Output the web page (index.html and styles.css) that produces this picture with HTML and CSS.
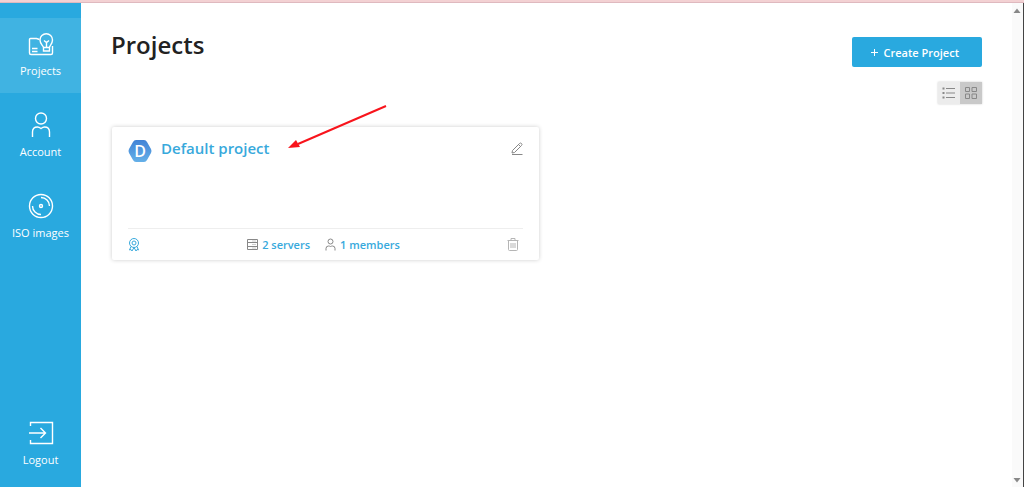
FILE: index.html
```html
<!DOCTYPE html>
<html lang="en">

<head>
    <meta charset="UTF-8">
    <meta name="viewport" content="width=device-width, initial-scale=1.0">
    <title>Projects</title>
    <link rel="stylesheet" href="styles.css">
</head>

<body>
    <div class="top-line"></div>
    <div class="layout">
        <nav class="sidebar">
            <a href="#" class="nav-item active">
                <svg width="26" height="24" viewBox="0 0 26 24">
                    <path d="M11.500 6.500L8.500 5.500H2.500Q1.500 5.500 1.500 6.500V20Q1.500 21.500 3 21.500H23Q24.500 21.500 24.500 20V13" />
                    <path d="M4 15.500H9.500M4 18.500H9.500" />
                    <path d="M15.500 14.500C15 12.500 12 11 12 7A6 6 0 0 1 24.500 7C24.500 11 21.500 12.500 21.500 14.500ZM15.500 14.500V18H21.500V14.500M18.500 14V9.500M16 7.500L18.500 9.500L21 7.500" />
                </svg>
                <span>Projects</span>
            </a>
            <a href="#" class="nav-item">
                <svg width="26" height="26" viewBox="0 0 26 26">
                    <circle cx="13" cy="6.500" r="5.500" />
                    <path d="M4.500 25V20Q4.500 15 9.500 15Q11 15 13 16.500Q15 15 16.500 15Q21.500 15 21.500 20V25" />
                </svg>
                <span>Account</span>
            </a>
            <a href="#" class="nav-item">
                <svg width="26" height="26" viewBox="0 0 26 26">
                    <circle cx="13" cy="13" r="11.500" />
                    <circle cx="13" cy="13" r="1.500" />
                    <path d="M13 4.500A8.500 8.500 0 0 1 21.500 13M4.500 13A8.500 8.500 0 0 0 13 21.500" />
                </svg>
                <span>ISO images</span>
            </a>
            <a href="#" class="nav-item logout">
                <svg width="26" height="26" viewBox="0 0 26 26">
                    <path d="M2.500 6V2.500H24.500V23.500H2.500V20M1 13H17.500M12.500 8L17.500 13L12.500 18" />
                </svg>
                <span>Logout</span>
            </a>
        </nav>

        <main class="content">
            <header class="page-header">
                <h1>Projects</h1>
                <div class="header-actions">
                    <button type="button" class="create-btn">
                        <svg width="7" height="7" viewBox="0 0 7 7">
                            <path d="M3.500 0V7M0 3.500H7" />
                        </svg>
                        <span>Create Project</span>
                    </button>
                    <div class="view-toggle">
                        <button type="button" aria-label="List view">
                            <svg width="14" height="12" viewBox="0 0 14 12">
                                <path d="M4 1.500H13M4 6H13M4 10.500H13" />
                                <path d="M0.500 1.500H2.500M0.500 6H2.500M0.500 10.500H2.500" stroke-width="2" />
                            </svg>
                        </button>
                        <button type="button" class="selected" aria-label="Grid view">
                            <svg width="12" height="12" viewBox="0 0 12 12">
                                <path d="M0.500 0.500H4.500V4.500H0.500ZM7 0.500H11.500V4.500H7ZM0.500 7H4.500V11.500H0.500ZM7 7H11.500V11.500H7Z" />
                            </svg>
                        </button>
                    </div>
                </div>
            </header>

            <section class="project-grid">
                <article class="project-card">
                    <div class="card-top">
                        <svg class="avatar" width="24" height="24" viewBox="0 0 24 24">
                            <defs>
                                <linearGradient id="avatar-fill" x1="0" y1="0" x2="0" y2="1">
                                    <stop offset="0" stop-color="#4283d6" />
                                    <stop offset="1" stop-color="#65b0e8" />
                                </linearGradient>
                            </defs>
                            <path d="M8 1H16Q18 1 19 3L23 10Q24 12 23 14L19 21Q18 23 16 23H8Q6 23 5 21L1 14Q0 12 1 10L5 3Q6 1 8 1Z" fill="url(#avatar-fill)" />
                            <text x="12" y="18" text-anchor="middle">D</text>
                        </svg>
                        <a href="#" class="project-name">Default project</a>
                        <button type="button" class="icon-btn edit" aria-label="Edit project">
                            <svg width="12" height="14" viewBox="0 0 12 14">
                                <path d="M1 11L1.500 8.500L8.500 1.500Q9.500 0.500 10.500 1.500Q11.500 2.500 10.500 3.500L3.500 10.500ZM7.500 2.500L9.500 4.500M1 12.500H11.500" />
                            </svg>
                        </button>
                    </div>
                    <div class="card-bottom">
                        <svg class="badge" width="12" height="14" viewBox="0 0 12 14">
                            <circle cx="6" cy="5" r="4.500" />
                            <circle cx="6" cy="5" r="2" />
                            <path d="M3 8.500L1.500 12L3 11.500L4 13L6 9.500L8 13L9 11.500L10.500 12L9 8.500" />
                        </svg>
                        <div class="stats">
                            <a href="#" class="stat">
                                <svg width="11" height="11" viewBox="0 0 11 11">
                                    <path d="M0.500 0.500H10.500V10.500H0.500ZM0.500 3.500H10.500M0.500 7.500H10.500" />
                                    <path d="M5 2H9M5 5.500H9M5 9H9" opacity="0.4" />
                                </svg>
                                <span>2 servers</span>
                            </a>
                            <a href="#" class="stat">
                                <svg width="11" height="13" viewBox="0 0 11 13">
                                    <circle cx="5.500" cy="3.500" r="2.500" />
                                    <path d="M1 12.500V10.500Q1 8 3.500 8Q4.500 8 5.500 8.500Q6.500 8 7.500 8Q10 8 10 10.500V12.500" />
                                </svg>
                                <span>1 members</span>
                            </a>
                        </div>
                        <button type="button" class="icon-btn delete" aria-label="Delete project">
                            <svg width="12" height="13" viewBox="0 0 12 13">
                                <path d="M0.500 2.500H11.500M4 2.500V0.500H8V2.500M1.500 2.500V11.500Q1.500 12.500 2.500 12.500H9.500Q10.500 12.500 10.500 11.500V2.500M4 5V10M6 5V10M8 5V10" />
                            </svg>
                        </button>
                    </div>
                    <svg class="pointer" width="100" height="46" viewBox="0 0 100 46">
                        <path d="M98 2L10 40" stroke="#f8141c" stroke-width="2" />
                        <path d="M0 44L8 36L12 43Z" fill="#f8141c" />
                    </svg>
                </article>
            </section>
        </main>

        <div class="scroll-track">
            <svg width="8" height="5" viewBox="0 0 8 5">
                <path d="M0.500 5L4 0.500L7.500 5Z" />
            </svg>
            <svg width="8" height="5" viewBox="0 0 8 5">
                <path d="M0.500 0L4 4.500L7.500 0Z" />
            </svg>
        </div>
    </div>
</body>

</html>
```
FILE: styles.css
```css
* {
    box-sizing: border-box;
}

body {
    font-family: "Open Sans", Arial, sans-serif;
    margin: 0;
    min-height: 100vh;
    display: flex;
    flex-direction: column;
    background-color: #fff;
    color: #222;
}

a {
    text-decoration: none;
}

button {
    font-family: inherit;
    border: none;
    padding: 0;
    cursor: pointer;
}

svg {
    display: block;
    flex-shrink: 0;
    fill: none;
}

.top-line {
    height: 3px;
    background-color: #f3d1d3;
    border-bottom: 1px solid #dfb9bf;
}

.layout {
    flex: 1;
    display: flex;
}

.sidebar {
    width: 81px;
    padding: 15px 0 5px;
    display: flex;
    flex-direction: column;
    gap: 6px;
    background-color: #29a9df;
}

.nav-item {
    height: 75px;
    padding-bottom: 14px;
    display: flex;
    flex-direction: column;
    align-items: center;
    justify-content: flex-end;
    gap: 6px;
    color: #fff;
    font-size: 11px;
    line-height: 16px;
}

.nav-item.active {
    background-color: #40b3e2;
}

.nav-item svg {
    stroke: #fff;
    stroke-width: 1.4;
}

.nav-item.logout {
    margin-top: auto;
}

.content {
    flex: 1;
    padding: 26px 30px 20px 30px;
}

.page-header {
    display: flex;
    justify-content: space-between;
    align-items: flex-start;
}

.page-header h1 {
    margin: 0;
    font-size: 24px;
    line-height: 32px;
    font-weight: 600;
}

.header-actions {
    padding-top: 8px;
    display: flex;
    flex-direction: column;
    align-items: flex-end;
    gap: 15px;
}

.create-btn {
    height: 30px;
    padding: 0 23px 0 19px;
    display: flex;
    align-items: center;
    gap: 6px;
    background-color: #29a9df;
    border-radius: 2px;
    color: #fff;
    font-size: 11px;
    font-weight: 600;
}

.create-btn svg {
    stroke: #fff;
}

.view-toggle {
    display: flex;
    box-shadow: 0 0 2px rgba(0, 0, 0, 0.2);
}

.view-toggle button {
    width: 22px;
    height: 22px;
    display: flex;
    align-items: center;
    justify-content: center;
    background-color: #ececec;
}

.view-toggle svg {
    stroke: #888;
}

.view-toggle button.selected {
    background-color: #c9c9c9;
}

.project-grid {
    margin-top: 23px;
    padding-left: 1px;
    display: grid;
    grid-template-columns: 1fr 1fr;
    gap: 16px;
}

.project-card {
    position: relative;
    min-height: 133px;
    padding: 12px 16px 0;
    display: flex;
    flex-direction: column;
    justify-content: space-between;
    border-radius: 2px;
    box-shadow: 0 0 4px rgba(0, 0, 0, 0.2);
}

.card-top {
    display: flex;
    align-items: flex-start;
}

.avatar text {
    fill: #fff;
    font-size: 16px;
    font-weight: 600;
}

.project-name {
    margin-left: 9px;
    color: #38a9dc;
    font-size: 15px;
    line-height: 18px;
    font-weight: 600;
}

.icon-btn {
    margin-left: auto;
    background: none;
}

.icon-btn.edit {
    padding-top: 3px;
}

.edit svg {
    stroke: #888;
}

.card-bottom {
    height: 32px;
    padding-right: 4px;
    display: flex;
    align-items: center;
    border-top: 1px solid #eee;
}

.badge {
    stroke: #38a9dc;
}

.stats {
    margin: 0 auto;
    display: flex;
    gap: 15px;
}

.stat {
    display: flex;
    align-items: center;
    gap: 4px;
    color: #38a9dc;
    font-size: 11px;
    line-height: 16px;
    font-weight: 600;
}

.stat svg {
    stroke: #888;
}

.icon-btn.delete {
    margin-left: 0;
}

.delete svg {
    stroke: #b5b5b5;
}

/* arrow drawn over the card, pointing at the project name */
.pointer {
    position: absolute;
    top: -23px;
    left: 176px;
}

.scroll-track {
    width: 12px;
    padding: 5px 2px 4px 1px;
    display: flex;
    flex-direction: column;
    justify-content: space-between;
    background-color: #fafafa;
    border-right: 1px solid #444;
}

.scroll-track svg {
    fill: #888;
}
```
